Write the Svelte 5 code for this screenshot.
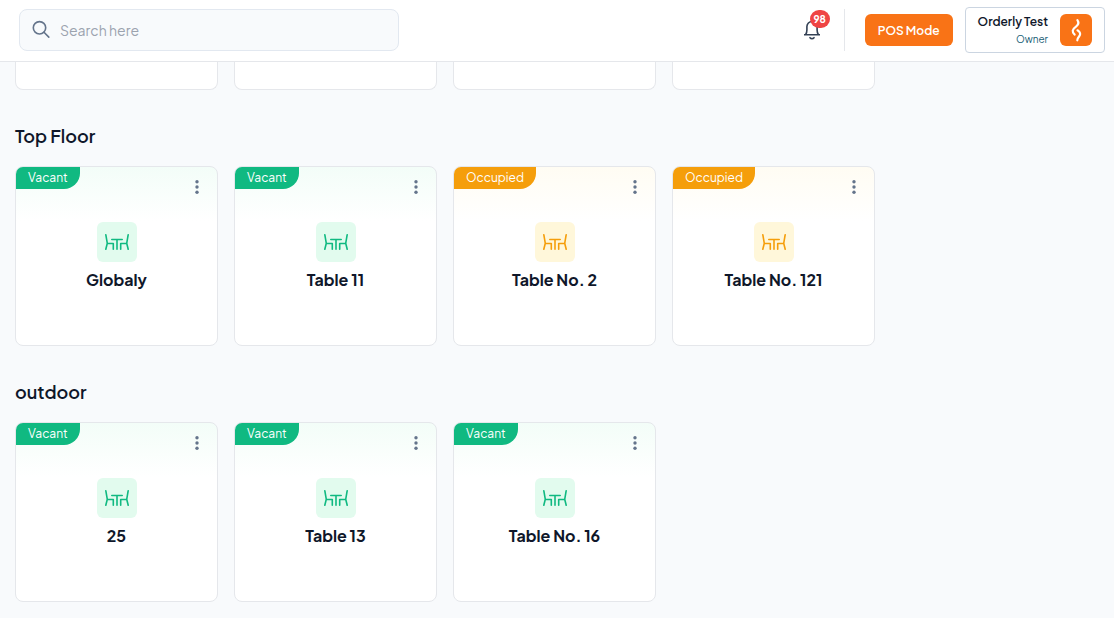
<script lang="ts">
  interface Table {
    name: string;
    status: 'Vacant' | 'Occupied';
  }

  interface Floor {
    title: string;
    tables: Table[];
  }

  const floors: Floor[] = [
    {
      title: 'Top Floor',
      tables: [
        { name: 'Globaly', status: 'Vacant' },
        { name: 'Table 11', status: 'Vacant' },
        { name: 'Table No. 2', status: 'Occupied' },
        { name: 'Table No. 121', status: 'Occupied' },
      ],
    },
    {
      title: 'outdoor',
      tables: [
        { name: '25', status: 'Vacant' },
        { name: 'Table 13', status: 'Vacant' },
        { name: 'Table No. 16', status: 'Vacant' },
      ],
    },
  ];

  let search = $state('');
</script>

<header class="topbar">
  <label class="search">
    <svg width="20" height="20" viewBox="0 0 20 20" fill="none" stroke="currentColor" stroke-width="1.6" stroke-linecap="round">
      <circle cx="7.5" cy="7.8" r="6.2" />
      <path d="M12 12.3l4.8 4.8" />
    </svg>
    <input type="text" placeholder="Search here" aria-label="Search" bind:value={search} />
  </label>

  <div class="actions">
    <button class="bell" type="button" aria-label="Notifications">
      <svg width="24" height="24" viewBox="0 0 24 24" fill="none" stroke="currentColor" stroke-width="1.6" stroke-linejoin="round">
        <path d="M4 16.8h16M5.7 16.5c.8-1.2 1.2-2.6 1.2-4.4V8.6a5.1 5.1 0 0 1 10.2 0v3.5c0 1.800.4 3.200 1.200 4.400" />
        <path d="M10 19.700c.5.600 1.200.9 2 .9s1.500-.3 2-.9" stroke-linecap="round" />
      </svg>
      <span class="count">98</span>
    </button>
    <span class="divider"></span>
    <button class="pos" type="button">POS Mode</button>
    <button class="account" type="button">
      <span class="who">
        <span class="user">Orderly Test</span>
        <span class="role">Owner</span>
      </span>
      <span class="logo">
        <svg width="32" height="32" viewBox="0 0 32 32" fill="none" stroke="#fff" stroke-width="2.2" stroke-linecap="round">
          <path d="M17.400 6.200c1.800 2.600 1.300 4.400-1.400 6.400-4 2.900-4.200 5-1.400 8" />
          <path d="M17.500 16.300c3 1.800 3.300 3.900 1.700 6-1.200 1.500-2 2.300-1.900 4" />
        </svg>
      </span>
    </button>
  </div>
</header>

<main>
  <div class="grid">
    {#each Array(4) as _}
      <div class="card-end"></div>
    {/each}
  </div>

  {#each floors as floor}
    <section>
      <h2>{floor.title}</h2>
      <div class="grid">
        {#each floor.tables as table}
          <article class="card" class:occupied={table.status === 'Occupied'}>
            <span class="status">{table.status}</span>
            <button class="more" type="button" aria-label="Options for {table.name}">
              <svg width="24" height="24" viewBox="0 0 24 24" fill="currentColor">
                <circle cx="12" cy="6.7" r="1.7" />
                <circle cx="12" cy="12" r="1.7" />
                <circle cx="12" cy="17.3" r="1.7" />
              </svg>
            </button>
            <span class="icon">
              <svg width="24" height="24" viewBox="0 0 24 24" fill="none" stroke="currentColor" stroke-width="1.6" stroke-linecap="round" stroke-linejoin="round">
                <path d="M.8 4.700l1.500 8.600L.8 19.300M2.300 13.500h6v5.800" />
                <path d="M23.200 4.700l-1.500 8.600 1.500 6M21.700 13.500h-6v5.800" />
                <path d="M6.800 9.500h10.400M12 9.500v9.800" />
              </svg>
            </span>
            <h3>{table.name}</h3>
          </article>
        {/each}
      </div>
    </section>
  {/each}
</main>

<style>
  :global(body) {
    margin: 0;
    background: #f8fafc;
    color: #0f172a;
    font-family: 'Plus Jakarta Sans', 'DM Sans', Inter, sans-serif;
  }

  button {
    font-family: inherit;
    border: 0;
    padding: 0;
    background: none;
    cursor: pointer;
  }

  svg {
    display: block;
    flex-shrink: 0;
  }

  .topbar {
    display: flex;
    align-items: center;
    justify-content: space-between;
    gap: 16px;
    padding: 7px 9px 8px 19px;
    background: #fff;
    border-bottom: 1px solid #e5e7eb;
  }

  .search {
    box-sizing: border-box;
    display: flex;
    align-items: center;
    gap: 8px;
    width: 380px;
    height: 42px;
    padding: 0 12px;
    color: #64748b;
    background: #f8fafc;
    border: 1px solid #e2e8f0;
    border-radius: 8px;
  }

  .search input {
    flex: 1;
    min-width: 0;
    padding: 0;
    border: 0;
    outline: 0;
    background: none;
    font: 14px/20px 'Plus Jakarta Sans', 'DM Sans', Inter, sans-serif;
    color: #0f172a;
  }

  .search input::placeholder {
    color: #9ca3af;
  }

  .actions {
    display: flex;
    align-items: center;
    gap: 12px;
  }

  .bell {
    position: relative;
    color: #334155;
  }

  .count {
    position: absolute;
    top: -8px;
    right: -6px;
    min-width: 20px;
    border-radius: 9px;
    background: #ef4444;
    color: #fff;
    font-size: 10px;
    font-weight: 700;
    line-height: 18px;
    text-align: center;
  }

  .divider {
    width: 1px;
    height: 42px;
    margin: 0 8px;
    background: #e5e7eb;
  }

  .pos {
    height: 32px;
    padding: 0 13px;
    border-radius: 6px;
    background: #f97316;
    color: #fff;
    font-size: 12px;
    font-weight: 600;
  }

  .account {
    display: flex;
    align-items: center;
    gap: 12px;
    padding: 6px 12px;
    background: #fff;
    border: 1px solid #cbd5e1;
    border-radius: 4px;
  }

  .who {
    display: flex;
    flex-direction: column;
    align-items: flex-end;
    gap: 2px;
  }

  .user {
    color: #0f172a;
    font-size: 12px;
    font-weight: 600;
    line-height: 16px;
  }

  .role {
    color: #155e75;
    font-size: 10px;
    line-height: 14px;
  }

  .logo {
    border-radius: 6px;
    background: #f97316;
  }

  main {
    padding: 0 20px 16px 15px;
  }

  .grid {
    display: grid;
    grid-template-columns: repeat(auto-fill, minmax(200px, 1fr));
    gap: 16px;
  }

  .card-end {
    height: 27px;
    background: #fff;
    border: 1px solid #e5e7eb;
    border-top: 0;
    border-radius: 0 0 8px 8px;
  }

  h2 {
    margin: 32px 0 16px;
    font-size: 18px;
    font-weight: 600;
    line-height: 28px;
  }

  .card {
    --accent: #10b981;
    --tint: #e2fbee;
    --fade: #f3fdf8;
    box-sizing: border-box;
    position: relative;
    display: flex;
    flex-direction: column;
    align-items: center;
    gap: 6px;
    min-height: 180px;
    padding: 55px 12px 12px;
    background: linear-gradient(var(--fade), #fff 54px);
    border: 1px solid #e5e7eb;
    border-radius: 8px;
  }

  .card.occupied {
    --accent: #f59e0b;
    --tint: #fff7da;
    --fade: #fffcf3;
  }

  .status {
    position: absolute;
    top: 0;
    left: 0;
    padding: 0 12px;
    border-radius: 7px 0 16px 0;
    background: var(--accent);
    color: #fff;
    font-size: 12px;
    line-height: 22px;
  }

  .more {
    position: absolute;
    top: 8px;
    right: 8px;
    color: #64748b;
  }

  .icon {
    padding: 8px;
    border-radius: 6px;
    background: var(--tint);
    color: var(--accent);
  }

  h3 {
    margin: 0;
    font-size: 16px;
    font-weight: 700;
    line-height: 24px;
    text-align: center;
  }
</style>
